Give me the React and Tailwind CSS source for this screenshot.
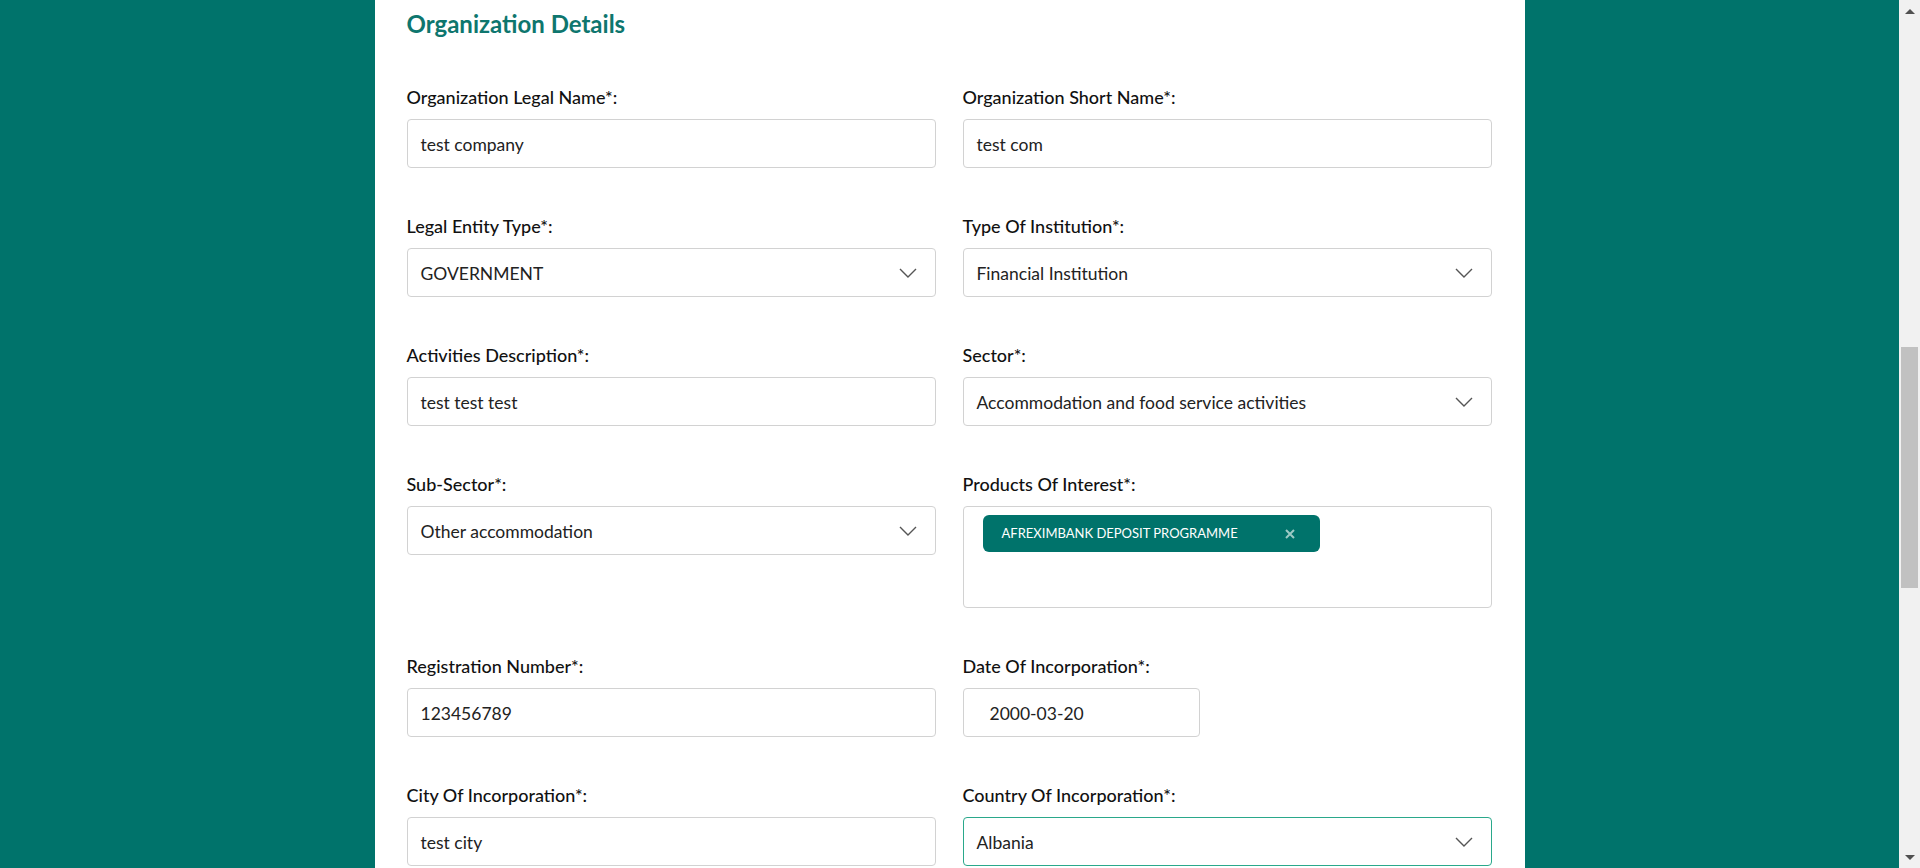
import React from "react";

const font = { fontFamily: "Lato, 'Open Sans', sans-serif" };

const Chevron = () => (
  <svg className="w-[18px] h-[10px]" viewBox="0 0 18 10" fill="none">
    <path d="M1 1l8 8 8-8" stroke="#555" strokeWidth="1.4" />
  </svg>
);

const Label = ({ children }) => (
  <label className="block h-6 leading-6 mb-[10px] text-[18px] text-[#111] font-medium">
    {children}
  </label>
);

const TextBox = ({ value }) => (
  <div className="h-[49px] flex items-center px-[13px] pt-[3px] border border-[#d2d2d2] rounded bg-white text-[17.5px] text-[#222]">
    {value}
  </div>
);

const SelectBox = ({ value, focused }) => (
  <div
    className={
      focused
        ? "h-[49px] flex items-center justify-between pl-[13px] pr-[18px] border border-[#2aa88b] rounded bg-white text-[17.5px] text-[#222]"
        : "h-[49px] flex items-center justify-between pl-[13px] pr-[18px] border border-[#d2d2d2] rounded bg-white text-[17.5px] text-[#222]"
    }
  >
    <span className="pt-[3px]">{value}</span>
    <Chevron />
  </div>
);

const Field = ({ label, children }) => (
  <div>
    <Label>{label}</Label>
    {children}
  </div>
);

const Scrollbar = () => (
  <div className="w-[21px] h-full bg-[#f1f1f1] flex flex-col">
    <div className="h-[21px] flex items-center justify-center">
      <svg className="w-[10px] h-[6px]" viewBox="0 0 10 6">
        <path d="M0 6L5 1l5 5z" fill="#505050" />
      </svg>
    </div>
    <div className="flex-1 px-[2px]">
      <div className="mt-[326px] h-[241px] bg-[#c1c1c1]" />
    </div>
    <div className="h-[21px] flex items-center justify-center">
      <svg className="w-[10px] h-[6px]" viewBox="0 0 10 6">
        <path d="M0 0l5 5 5-5z" fill="#505050" />
      </svg>
    </div>
  </div>
);

export default function App() {
  return (
    <div className="h-[868px] w-full flex overflow-hidden bg-[#00736b]" style={font}>
      <div className="flex-1 flex justify-center">
        <div className="w-[1150px] h-full bg-white pl-8 pr-[33px] pt-2">
          <h2 className="h-8 leading-8 text-[24px] font-bold text-[#0e766e]">
            Organization Details
          </h2>
          <div className="mt-[45px] grid grid-cols-2 gap-x-[27px] gap-y-[46px] items-start">
            <Field label="Organization Legal Name*:">
              <TextBox value="test company" />
            </Field>
            <Field label="Organization Short Name*:">
              <TextBox value="test com" />
            </Field>
            <Field label="Legal Entity Type*:">
              <SelectBox value="GOVERNMENT" />
            </Field>
            <Field label="Type Of Institution*:">
              <SelectBox value="Financial Institution" />
            </Field>
            <Field label="Activities Description*:">
              <TextBox value="test test test" />
            </Field>
            <Field label="Sector*:">
              <SelectBox value="Accommodation and food service activities" />
            </Field>
            <Field label="Sub-Sector*:">
              <SelectBox value="Other accommodation" />
            </Field>
            <Field label="Products Of Interest*:">
              <div className="h-[102px] border border-[#d2d2d2] rounded bg-white pl-[19px] pt-2">
                <div className="w-[337px] h-[37px] rounded-md bg-[#00736b] flex items-center justify-between pl-[19px] pr-[25px]">
                  <span className="text-[13px] text-white">AFREXIMBANK DEPOSIT PROGRAMME</span>
                  <svg className="w-[10px] h-[10px]" viewBox="0 0 10 10">
                    <path d="M1 1l8 8M9 1l-8 8" stroke="#9ccac5" strokeWidth="2" />
                  </svg>
                </div>
              </div>
            </Field>
            <Field label="Registration Number*:">
              <TextBox value="123456789" />
            </Field>
            <Field label="Date Of Incorporation*:">
              <div className="w-[237px] h-[49px] flex items-center pl-[26px] pt-[3px] border border-[#d2d2d2] rounded bg-white text-[17.5px] text-[#222]">
                2000-03-20
              </div>
            </Field>
            <Field label="City Of Incorporation*:">
              <TextBox value="test city" />
            </Field>
            <Field label="Country Of Incorporation*:">
              <SelectBox value="Albania" focused />
            </Field>
          </div>
        </div>
      </div>
      <Scrollbar />
    </div>
  );
}
